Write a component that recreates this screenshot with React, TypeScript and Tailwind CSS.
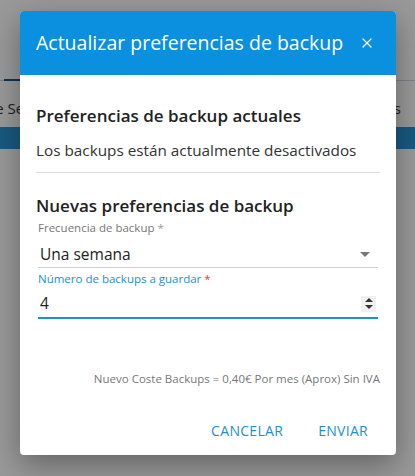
import { X } from "lucide-react";

const FONT = { fontFamily: "'Open Sans', Lato, sans-serif" };

function Page() {
  return (
    <div className="min-h-[476px] bg-white">
      <div className="h-[80px]" />
      <div className="relative border-b border-gray-300">
        <div className="absolute left-[4px] bottom-[-1px] h-[2px] w-[16px] bg-[#0b5d91]" />
      </div>
      <div className="flex h-[46px] items-center justify-between pt-[8px] text-[15px] text-[#333]">
        <span className="w-[22px] overflow-hidden whitespace-nowrap">
          <span className="ml-[-14px] inline-block">de Servidor</span>
        </span>
        <span className="w-[10px] overflow-hidden whitespace-nowrap mr-[14px]" dir="rtl">Backups</span>
      </div>
      <div className="h-[22px] bg-[#2a94d8]" />
    </div>
  );
}

export default function App() {
  return (
    <div className="relative h-[476px] w-[415px] overflow-hidden" style={FONT}>
      <Page />
      <div className="absolute inset-0 bg-black/40" />
      <div className="absolute left-[20px] top-[11px] flex h-[444px] w-[376px] flex-col overflow-hidden rounded-[4px] bg-white shadow-[0_10px_30px_rgba(0,0,0,0.35)]">
        <div className="flex h-[64px] items-center justify-between bg-[#0b8fdf] pl-[16px] pr-[21px] text-white">
          <h2 className="text-[19.5px] font-normal">Actualizar preferencias de backup</h2>
          <X className="h-[16px] w-[16px]" strokeWidth={1.8} />
        </div>

        <div className="flex flex-1 flex-col px-[16px]">
          <h3 className="mt-[28px] text-[17px] font-semibold leading-[26px] text-[#222]">Preferencias de backup actuales</h3>
          <p className="mt-[10px] text-[15.3px] leading-[22px] text-[#333]">Los backups están actualmente desactivados</p>
          <div className="mt-[11px] h-px bg-[#dcdcdc]" />

          <h3 className="mt-[20px] text-[17px] font-semibold leading-[26px] text-[#222]">Nuevas preferencias de backup</h3>

          <div className="mx-[2px]">
            <label className="mt-[1px] block text-[11.5px] leading-[16px] text-[#777]">
              Frecuencia de backup <span className="text-[#999]">*</span>
            </label>
            <div className="flex h-[32px] items-center justify-between border-b border-[#cfcfcf] pl-[2px] pr-[8px] pt-[6px]">
              <span className="text-[15.5px] text-[#222]">Una semana</span>
              <svg width="10" height="5" viewBox="0 0 10 5">
                <path d="M0 0h10L5 5z" fill="#777" />
              </svg>
            </div>

            <label className="mt-[3px] block text-[11.5px] leading-[16px] text-[#1a8fd6]">
              Número de backups a guardar <span className="text-[#e53935]">*</span>
            </label>
            <div className="flex h-[32px] items-center justify-between border-b-2 border-[#1a8fd6] pl-[2px] pr-[2px] pt-[3px]">
              <span className="text-[15.5px] text-[#222]">4</span>
              <div className="flex h-[16px] w-[15px] flex-col items-center justify-center gap-[3px] bg-[#f0f0f0]">
                <svg width="8" height="4" viewBox="0 0 8 4"><path d="M4 0l4 4H0z" fill="#333" /></svg>
                <svg width="8" height="4" viewBox="0 0 8 4"><path d="M0 0h8L4 4z" fill="#333" /></svg>
              </div>
            </div>
          </div>

          <p className="mt-[52px] text-right text-[11.5px] leading-[16px] text-[#777]">
            Nuevo Coste Backups = 0,40€ Por mes (Aprox) Sin IVA
          </p>

          <div className="mt-[33px] flex justify-end gap-[35px] pr-[12px]">
            <button className="text-[14px] tracking-[0.3px] text-[#1a8fd6]">CANCELAR</button>
            <button className="text-[14px] tracking-[0.3px] text-[#1a8fd6]">ENVIAR</button>
          </div>
        </div>
      </div>
    </div>
  );
}
